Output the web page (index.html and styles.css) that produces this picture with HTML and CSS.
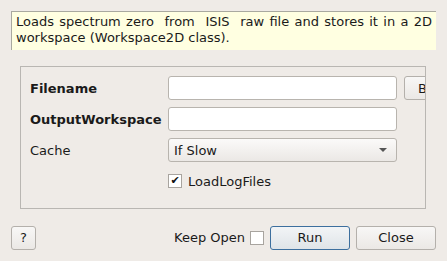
FILE: index.html
```html
<!DOCTYPE html>
<html lang="en">
	<head>
		<meta charset="UTF-8">
		<title>LoadRaw</title>
		<link rel="stylesheet" href="styles.css">
	</head>
	<body>
		<div class="desc">Loads spectrum zero&nbsp; from&nbsp; ISIS&nbsp; raw file and stores it in a 2D workspace (Workspace2D class).</div>
		<div class="group">
			<div class="form">
				<strong>Filename</strong>
				<div class="input"></div>
				<div class="btn browse">Browse</div>

				<strong>OutputWorkspace</strong>
				<div class="input"></div>
				<div></div>

				<span>Cache</span>
				<div class="combo">If Slow<i class="arrow"></i></div>
				<div></div>

				<span></span>
				<label class="check"><i class="box on">&#10004;</i>LoadLogFiles</label>
				<div></div>
			</div>
		</div>
		<div class="footer">
			<div class="btn help">?</div>
			<label class="keep">Keep Open <i class="box"></i></label>
			<div class="btn run">Run</div>
			<div class="btn close">Close</div>
		</div>
	</body>
</html>
```

FILE: styles.css
```css
* {
	margin: 0;
	padding: 0;
	box-sizing: border-box;
}

body {
	width: 447px;
	height: 261px;
	background: #efebe7;
	font-family: "DejaVu Sans", sans-serif;
	font-size: 13px;
	color: #1a1a1a;
	overflow: hidden;
}

.desc {
	margin: 11px 11px 0 11px;
	height: 39px;
	padding: 2px 4px 0 4px;
	background: #ffffe1;
	border-left: 1px solid #a9a9a0;
	border-top: 1px solid #a9a9a0;
	line-height: 16px;
	text-align: justify;
}

.group {
	margin: 16px 21px 0 20px;
	height: 143px;
	border: 1px solid #b9b6b2;
	overflow: hidden;
	padding: 9px 0 0 9px;
}

.form {
	display: grid;
	grid-template-columns: 131px 229px 80px;
	grid-auto-rows: 24px;
	column-gap: 7px;
	row-gap: 7px;
	align-items: center;
}

.form strong {
	font-weight: bold;
}

.input, .combo {
	height: 24px;
	background: #fff;
	border: 1px solid #b8b4ae;
	border-radius: 3px;
}

.combo {
	background: linear-gradient(#fbfaf9, #ebe8e5);
	display: flex;
	align-items: center;
	justify-content: space-between;
	padding: 0 9px 0 5px;
}

.arrow {
	width: 0;
	height: 0;
	border-left: 4px solid transparent;
	border-right: 4px solid transparent;
	border-top: 4px solid #555;
}

.check, .keep {
	display: flex;
	align-items: center;
}

.box {
	display: inline-block;
	width: 14px;
	height: 14px;
	border: 1px solid #a8a49f;
	background: #fff;
	font-style: normal;
	font-size: 11px;
	line-height: 12px;
	text-align: center;
	color: #111;
}

.check .box {
	margin-right: 6px;
}

.keep .box {
	margin-left: 5px;
}

.btn {
	height: 24px;
	border: 1px solid #b4b0ab;
	border-radius: 3px;
	background: linear-gradient(#f8f7f6, #ebe8e5);
	display: flex;
	align-items: center;
	justify-content: center;
}

.browse {
	justify-content: flex-start;
	padding-left: 13px;
}

.footer {
	display: flex;
	align-items: center;
	margin: 16px 11px 0 11px;
	height: 25px;
}

.help {
	width: 25px;
}

.keep {
	margin-left: auto;
	margin-right: 6px;
}

.run {
	width: 80px;
	border-color: #3d6f9e;
	background: linear-gradient(#f2f4f6, #dfe4e8);
}

.close {
	width: 80px;
	margin-left: 6px;
}
```
